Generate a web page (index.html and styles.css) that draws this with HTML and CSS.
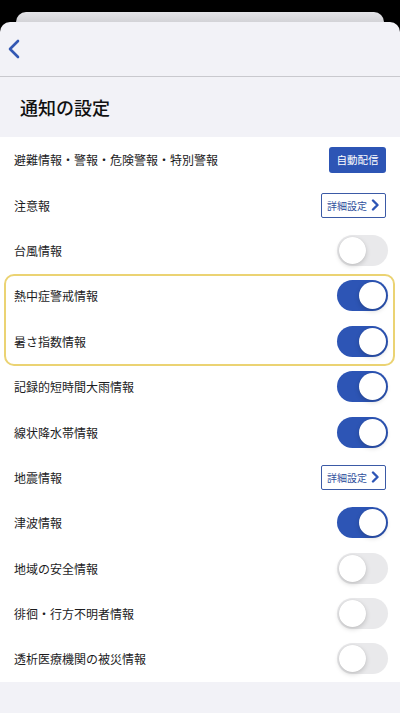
FILE: index.html
```html
<!DOCTYPE html>
<html lang="ja">
<head>
<meta charset="utf-8">
<title>通知の設定</title>
<link rel="stylesheet" href="styles.css">
</head>
<body>
<div class="back-card"></div>
<div class="sheet">
  <header class="nav">
    <svg class="back" width="14" height="20" viewBox="0 0 14 20"><path d="M11 2 L3 10 L11 18" fill="none" stroke="#3358b3" stroke-width="2.6" stroke-linecap="round" stroke-linejoin="round"/></svg>
  </header>
  <h1 class="title">通知の設定</h1>
  <ul class="list">
    <li class="row"><span class="label">避難情報・警報・危険警報・特別警報</span><span class="btn-auto">自動配信</span></li>
    <li class="row"><span class="label">注意報</span><span class="btn-detail">詳細設定<svg width="9" height="12" viewBox="0 0 9 12"><path d="M2 1.5 L6.5 6 L2 10.5" fill="none" stroke="#2d55b5" stroke-width="2.4" stroke-linecap="round" stroke-linejoin="round"/></svg></span></li>
    <li class="row"><span class="label">台風情報</span><span class="toggle"></span></li>
    <li class="group">
      <ul class="list">
        <li class="row"><span class="label">熱中症警戒情報</span><span class="toggle on"></span></li>
        <li class="row"><span class="label">暑さ指数情報</span><span class="toggle on"></span></li>
      </ul>
    </li>
    <li class="row"><span class="label">記録的短時間大雨情報</span><span class="toggle on"></span></li>
    <li class="row"><span class="label">線状降水帯情報</span><span class="toggle on"></span></li>
    <li class="row"><span class="label">地震情報</span><span class="btn-detail">詳細設定<svg width="9" height="12" viewBox="0 0 9 12"><path d="M2 1.5 L6.5 6 L2 10.5" fill="none" stroke="#2d55b5" stroke-width="2.4" stroke-linecap="round" stroke-linejoin="round"/></svg></span></li>
    <li class="row"><span class="label">津波情報</span><span class="toggle on"></span></li>
    <li class="row"><span class="label">地域の安全情報</span><span class="toggle"></span></li>
    <li class="row"><span class="label">徘徊・行方不明者情報</span><span class="toggle"></span></li>
    <li class="row"><span class="label">透析医療機関の被災情報</span><span class="toggle"></span></li>
  </ul>
</div>
</body>
</html>
```

FILE: styles.css
```css
html, body {
  margin: 0;
  padding: 0;
  background: #000;
  font-family: "Noto Sans CJK JP", "Noto Sans", sans-serif;
  color: #1c1c1e;
}
body {
  padding-top: 12px;
  height: 713px;
  box-sizing: border-box;
  overflow: hidden;
}
.back-card {
  height: 10px;
  margin: 0 16px;
  background: linear-gradient(#e4e4e8, #d3d3d7);
  border-radius: 10px 10px 0 0;
}
.sheet {
  background: #f2f2f7;
  border-radius: 10px 10px 0 0;
  height: 691px;
}
.nav {
  height: 55px;
  border-bottom: 1px solid #c9c9ce;
  display: flex;
  align-items: center;
  padding-left: 7px;
  box-sizing: border-box;
}
.back {
  display: block;
  margin-top: 0;
}
.title {
  margin: 0;
  height: 60px;
  display: flex;
  align-items: center;
  padding-left: 20px;
  font-size: 18px;
  font-weight: 500;
  color: #111;
}
.list {
  list-style: none;
  margin: 0;
  padding: 0;
  background: #fff;
}
.row {
  height: 45.4px;
  display: flex;
  align-items: center;
  justify-content: space-between;
  padding: 0 12px 0 14px;
}
.label {
  font-size: 12px;
  color: #1c1c1e;
}
.group {
  position: relative;
}
.group::after {
  content: "";
  position: absolute;
  top: 1px;
  bottom: -2px;
  left: 4px;
  right: 5px;
  border: 2px solid #ebd373;
  border-radius: 10px;
  pointer-events: none;
}
.btn-auto {
  width: 57px;
  height: 26px;
  margin-right: 2px;
  background: #2d55b5;
  color: #fff;
  font-size: 10.5px;
  border-radius: 3px;
  display: flex;
  align-items: center;
  justify-content: center;
}
.btn-detail {
  width: 65px;
  height: 25px;
  margin-right: 2px;
  box-sizing: border-box;
  border: 1px solid #3b5aa6;
  border-radius: 2px;
  background: #fff;
  color: #2f4f9c;
  font-size: 10px;
  display: flex;
  align-items: center;
  justify-content: center;
  gap: 4px;
}
.btn-detail svg {
  display: block;
}
.toggle {
  position: relative;
  width: 51px;
  height: 31px;
  border-radius: 16px;
  background: #e9e9eb;
  flex: none;
}
.toggle::after {
  content: "";
  position: absolute;
  top: 2px;
  left: 2px;
  width: 27px;
  height: 27px;
  border-radius: 50%;
  background: #fff;
  box-shadow: 0 2px 5px rgba(0,0,0,0.18), 0 0 1px rgba(0,0,0,0.1);
}
.toggle.on {
  background: #2d55b5;
}
.toggle.on::after {
  left: 22px;
}
```
